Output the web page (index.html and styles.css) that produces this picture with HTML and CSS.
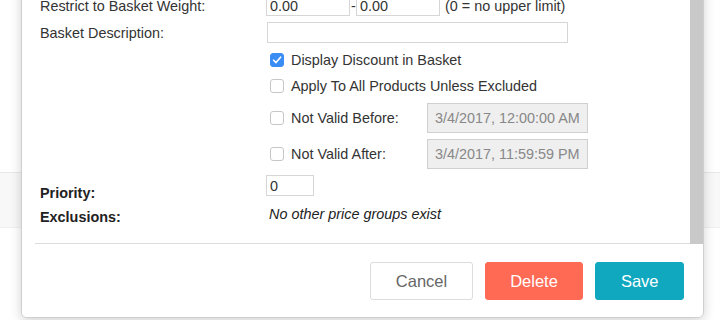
FILE: index.html
```html
<!DOCTYPE html>
<html>
<head>
<meta charset="utf-8">
<link rel="stylesheet" href="styles.css">
</head>
<body>
<div class="page">
  <div class="band"></div>
</div>
<div class="modal">
  <div class="modal-body">
    <div class="content">
      <div class="row row-21">
        <div class="label">Restrict to Basket Weight:</div>
        <div class="value">
          <input class="field w-weight" value="0.00" readonly>
          <span class="dash">-</span>
          <input class="field w-weight" value="0.00" readonly>
          <span class="hint">(0 = no upper limit)</span>
        </div>
      </div>
      <div class="row row-21 gap-6">
        <div class="label">Basket Description:</div>
        <div class="value">
          <input class="field w-desc" value="" readonly>
        </div>
      </div>
      <div class="row row-20 gap-7">
        <div class="label"></div>
        <div class="value check-line">
          <span class="box checked"><svg width="10" height="10" viewBox="0 0 10 10"><path d="M1.6 5.2 L4 7.6 L8.6 2.2" fill="none" stroke="#fff" stroke-width="1.6" stroke-linecap="round" stroke-linejoin="round"/></svg></span>
          <span class="check-text">Display Discount in Basket</span>
        </div>
      </div>
      <div class="row row-20 gap-6">
        <div class="label"></div>
        <div class="value check-line">
          <span class="box"></span>
          <span class="check-text">Apply To All Products Unless Excluded</span>
        </div>
      </div>
      <div class="row row-30 gap-7">
        <div class="label"></div>
        <div class="value check-line">
          <span class="box"></span>
          <span class="check-text date-label">Not Valid Before:</span>
          <input class="date" value="3/4/2017, 12:00:00 AM" readonly>
        </div>
      </div>
      <div class="row row-31 gap-5">
        <div class="label"></div>
        <div class="value check-line">
          <span class="box"></span>
          <span class="check-text date-label">Not Valid After:</span>
          <input class="date" value="3/4/2017, 11:59:59 PM" readonly>
        </div>
      </div>
      <div class="row row-top gap-6">
        <div class="label bold pad-8">Priority:</div>
        <div class="value">
          <input class="field w-prio" value="0" readonly>
        </div>
      </div>
      <div class="row row-top gap-1">
        <div class="label bold pad-3">Exclusions:</div>
        <div class="value note">No other price groups exist</div>
      </div>
      <div class="sep"></div>
    </div>
    <div class="scrollbar"></div>
  </div>
  <div class="modal-footer">
    <button class="btn btn-cancel">Cancel</button>
    <button class="btn btn-delete">Delete</button>
    <button class="btn btn-save">Save</button>
  </div>
</div>
</body>
</html>
```
FILE: styles.css
```css
* { box-sizing: border-box; }
html, body {
  margin: 0;
  padding: 0;
  width: 720px;
  height: 320px;
  overflow: hidden;
  background: #fff;
  font-family: "Liberation Sans", Arial, Helvetica, sans-serif;
  font-size: 14.4px;
  color: #333;
}
.page {
  padding-top: 172px;
}
.band {
  height: 56px;
  background: #f8f8f8;
  border-top: 1px solid #e8e8e8;
  border-bottom: 1px solid #f0f0f0;
}
.modal {
  position: absolute;
  left: 21px;
  top: -20px;
  width: 683px;
  height: 338px;
  background: #fff;
  border: 1px solid #cfcfcf;
  border-radius: 6px;
  box-shadow: 0 3px 12px rgba(0, 0, 0, 0.18);
  display: flex;
  flex-direction: column;
  overflow: hidden;
}
.modal-body {
  flex: 1;
  display: flex;
  overflow: hidden;
}
.content {
  flex: 1;
  padding: 14px 0 0 13px;
}
.scrollbar {
  width: 13px;
  background: #c9c9c9;
}
.row {
  display: flex;
  align-items: center;
  padding-left: 5px;
}
.row-top { align-items: flex-start; }
.row-20 { height: 20px; }
.row-21 { height: 21px; }
.row-30 { height: 30px; }
.row-31 { height: 31px; }
.gap-1 { margin-top: 1px; }
.gap-5 { margin-top: 5px; }
.gap-6 { margin-top: 6px; }
.gap-7 { margin-top: 7px; }
.label {
  width: 226px;
  flex: none;
  line-height: 20px;
  color: #333;
}
.bold { font-weight: bold; color: #222; }
.pad-8 { padding-top: 8px; }
.pad-3 { padding-top: 3px; }
.value {
  display: flex;
  align-items: center;
  line-height: 20px;
}
.field {
  height: 21px;
  border: 1px solid #d6d6d6;
  background: #fff;
  font-family: "Liberation Sans", Arial, sans-serif;
  font-size: 14.4px;
  color: #333;
  padding: 0 3px;
  margin: 0;
  outline: none;
}
.w-weight { width: 84px; }
.w-desc { width: 301px; margin-left: 1px; }
.w-prio { width: 48px; }
.dash { width: 6px; text-align: left; padding-left: 1px; }
.hint { margin-left: 5px; }
.check-line { padding-left: 4px; }
.box {
  width: 14px;
  height: 14px;
  border: 1px solid #c6c6c6;
  border-radius: 3px;
  background: #fff;
  display: flex;
  align-items: center;
  justify-content: center;
  flex: none;
}
.box.checked {
  background: #3a8df4;
  border-color: #3a8df4;
}
.check-text { margin-left: 7px; color: #333; }
.date-label { width: 136px; }
.date {
  width: 161px;
  height: 30px;
  border: 1px solid #d0d0d0;
  background: #efefef;
  color: #888;
  font-family: "Liberation Sans", Arial, sans-serif;
  font-size: 14.4px;
  padding: 0 0 0 7px;
  margin: 0;
  outline: none;
}
.note {
  font-style: italic;
  padding-left: 3px;
  color: #222;
}
.sep {
  margin-top: 16px;
  height: 1px;
  background: #dcdcdc;
}
.modal-footer {
  height: 73px;
  flex: none;
  display: flex;
  justify-content: flex-end;
  align-items: flex-start;
  gap: 12px;
  padding: 18px 19px 0 0;
  background: #fff;
}
.btn {
  height: 38px;
  padding: 0 24.5px;
  border-radius: 3px;
  font-family: "Liberation Sans", Arial, sans-serif;
  font-size: 16.5px;
  border: 1px solid transparent;
  color: #fff;
  cursor: pointer;
}
.btn-cancel {
  background: #fff;
  border-color: #dcdcdc;
  color: #666;
}
.btn-delete { background: #ff6a55; border-color: #ff6a55; }
.btn-save { background: #10a8bf; border-color: #10a8bf; }
```
